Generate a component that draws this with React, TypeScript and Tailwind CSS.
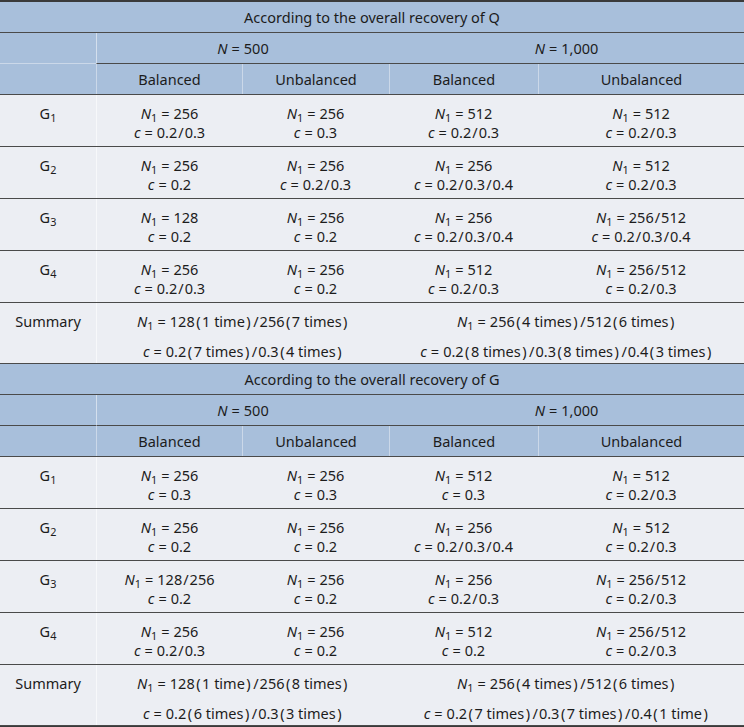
const cols = "grid grid-cols-[96px_146px_147px_149px_206px]";

type Cell = [string, string];
type Section = {
	title: string;
	rows: [string, Cell, Cell, Cell, Cell][];
	summary: { n500: [string, string]; n1000: [string, string] };
	splitRule: boolean;
};

const sections: Section[] = [
	{
		title: "According to the overall recovery of Q",
		splitRule: true,
		rows: [
			["1", ["256", "0.2/0.3"], ["256", "0.3"], ["512", "0.2/0.3"], ["512", "0.2/0.3"]],
			["2", ["256", "0.2"], ["256", "0.2/0.3"], ["256", "0.2/0.3/0.4"], ["512", "0.2/0.3"]],
			["3", ["128", "0.2"], ["256", "0.2"], ["256", "0.2/0.3/0.4"], ["256/512", "0.2/0.3/0.4"]],
			["4", ["256", "0.2/0.3"], ["256", "0.2"], ["512", "0.2/0.3"], ["256/512", "0.2/0.3"]],
		],
		summary: {
			n500: ["128(1 time)/256(7 times)", "0.2(7 times)/0.3(4 times)"],
			n1000: ["256(4 times)/512(6 times)", "0.2(8 times)/0.3(8 times)/0.4(3 times)"],
		},
	},
	{
		title: "According to the overall recovery of G",
		splitRule: false,
		rows: [
			["1", ["256", "0.3"], ["256", "0.3"], ["512", "0.3"], ["512", "0.2/0.3"]],
			["2", ["256", "0.2"], ["256", "0.2"], ["256", "0.2/0.3/0.4"], ["512", "0.2/0.3"]],
			["3", ["128/256", "0.2"], ["256", "0.2"], ["256", "0.2/0.3"], ["256/512", "0.2/0.3"]],
			["4", ["256", "0.2/0.3"], ["256", "0.2"], ["512", "0.2"], ["256/512", "0.2/0.3"]],
		],
		summary: {
			n500: ["128(1 time)/256(8 times)", "0.2(6 times)/0.3(3 times)"],
			n1000: ["256(4 times)/512(6 times)", "0.2(7 times)/0.3(7 times)/0.4(1 time)"],
		},
	},
];

// math-ish spacing around slashes and brackets
function MathText({ text }: { text: string }) {
	return (
		<>
			{text.split(/([()/])/).map((part, i) =>
				part === "/" ? (
					<span key={i} className="mx-px">/</span>
				) : part === "(" || part === ")" ? (
					<span key={i} className="mx-[1.5px]">{part}</span>
				) : (
					part
				),
			)}
		</>
	);
}

function Eq() {
	return <span className="mx-[4px]">=</span>;
}

function N1() {
	return (
		<>
			<i>N</i>
			<sub className="not-italic">1</sub>
		</>
	);
}

function Lines({ a, b }: { a: string; b: string }) {
	return (
		<>
			<span>
				<N1 />
				<Eq />
				<MathText text={a} />
			</span>
			<span>
				<i>c</i>
				<Eq />
				<MathText text={b} />
			</span>
		</>
	);
}

function SectionBlock({ s }: { s: Section }) {
	return (
		<>
			<div className="flex h-[31px] items-center justify-center border-b border-[#4a4a4a] bg-[#a8bfdb] pt-[2px]">
				{s.title}
			</div>
			<div className={`${cols} h-[31px] bg-[#a8bfdb]`}>
				<div className={s.splitRule ? "border-b border-white/40" : "border-b border-[#4a4a4a]"} />
				<div className="col-span-2 flex items-center justify-center border-b border-l border-[#4a4a4a] border-l-white/50 pt-[2px]">
					<span>
						<i>N</i>
						<Eq />
						500
					</span>
				</div>
				<div className="col-span-2 flex items-center justify-center border-b border-[#4a4a4a] pt-[2px]">
					<span>
						<i>N</i>
						<Eq />
						1,000
					</span>
				</div>
			</div>
			<div className={`${cols} h-[31px] border-b border-[#4a4a4a] bg-[#a8bfdb]`}>
				<div />
				{["Balanced", "Unbalanced", "Balanced", "Unbalanced"].map((t, i) => (
					<div key={i} className="flex items-center justify-center border-l border-white/40 pt-[2px]">
						{t}
					</div>
				))}
			</div>
			{s.rows.map((r) => (
				<div key={r[0]} className={`${cols} h-[52px] border-b border-[#4a4a4a] bg-[#eceef3]`}>
					<div className="pt-[9px] text-center leading-[19px]">
						G<sub>{r[0]}</sub>
					</div>
					{[r[1], r[2], r[3], r[4]].map((c, i) => (
						<div
							key={i}
							className={`flex flex-col items-center pt-[9px] leading-[19px] ${i === 0 ? "border-l border-white/60" : ""}`}
						>
							<Lines a={c[0]} b={c[1]} />
						</div>
					))}
				</div>
			))}
			<div className={`${cols} h-[61px] border-b border-[#4a4a4a] bg-[#eceef3]`}>
				<div className="pt-[9px] text-center leading-[19px]">Summary</div>
				<div className="col-span-2 flex flex-col items-center gap-[11px] border-l border-white/60 pt-[9px] leading-[19px]">
					<Lines a={s.summary.n500[0]} b={s.summary.n500[1]} />
				</div>
				<div className="col-span-2 flex flex-col items-center gap-[11px] pt-[9px] leading-[19px]">
					<Lines a={s.summary.n1000[0]} b={s.summary.n1000[1]} />
				</div>
			</div>
		</>
	);
}

export default function App() {
	return (
		<div className="w-[744px] border-y-2 border-[#3a3a3a] font-['Noto_Sans',sans-serif] text-[14.5px] text-[#1c1c1c]">
			{sections.map((s) => (
				<SectionBlock key={s.title} s={s} />
			))}
		</div>
	);
}
